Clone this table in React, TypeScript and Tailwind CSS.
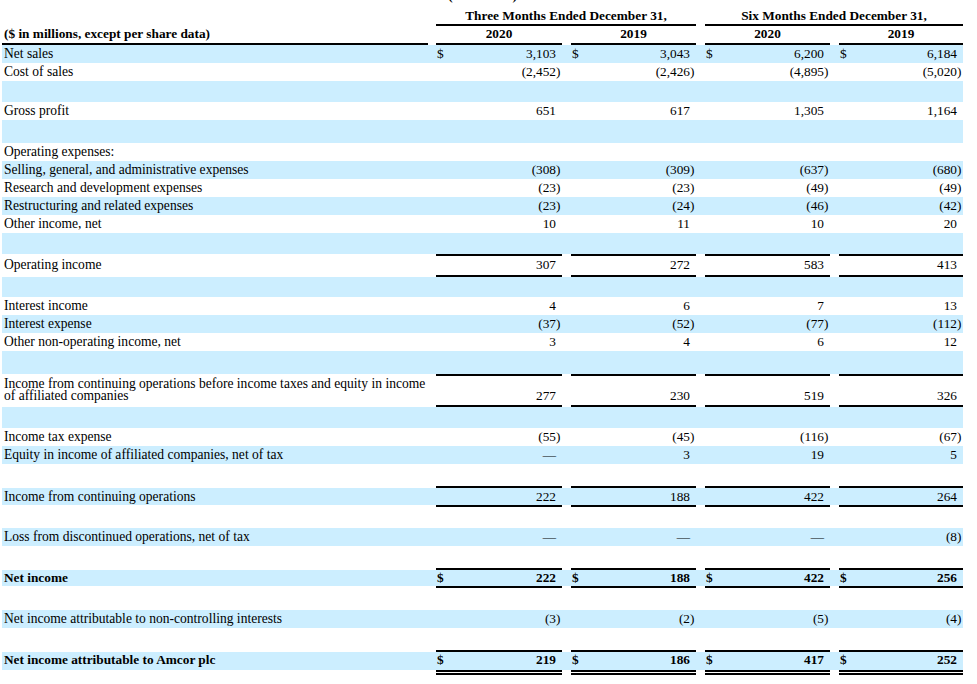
import React from "react";

type Row = {
  label?: React.ReactNode;
  v?: string[];
  blue?: boolean;
  h: string;
  border?: string;
  dollar?: boolean;
  bold?: boolean;
  lead?: string;
  labelCls?: string;
  bottomAlign?: boolean;
};

const cols =
  "grid grid-cols-[426px_8px_126px_9px_125px_9px_125px_9px_124px]";

const rows: Row[] = [
  { label: "Net sales", v: ["3,103", "3,043", "6,200", "6,184"], blue: true, h: "h-[18px]", dollar: true },
  { label: "Cost of sales", v: ["(2,452)", "(2,426)", "(4,895)", "(5,020)"], h: "h-[18px]", border: "border-b-2" },
  { blue: true, h: "h-[21px]" },
  { label: "Gross profit", v: ["651", "617", "1,305", "1,164"], h: "h-[18px]" },
  { blue: true, h: "h-[23px]" },
  { label: "Operating expenses:", h: "h-[18px]" },
  { label: "Selling, general, and administrative expenses", v: ["(308)", "(309)", "(637)", "(680)"], blue: true, h: "h-[18px]" },
  { label: "Research and development expenses", v: ["(23)", "(23)", "(49)", "(49)"], h: "h-[18px]" },
  { label: "Restructuring and related expenses", v: ["(23)", "(24)", "(46)", "(42)"], blue: true, h: "h-[18px]" },
  { label: "Other income, net", v: ["10", "11", "10", "20"], h: "h-[18px]" },
  { blue: true, h: "h-[21px]" },
  { label: "Operating income", v: ["307", "272", "583", "413"], h: "h-[23px]", border: "border-y-2" },
  { blue: true, h: "h-[20px]" },
  { label: "Interest income", v: ["4", "6", "7", "13"], h: "h-[18px]" },
  { label: "Interest expense", v: ["(37)", "(52)", "(77)", "(112)"], blue: true, h: "h-[18px]" },
  { label: "Other non-operating income, net", v: ["3", "4", "6", "12"], h: "h-[18px]" },
  { blue: true, h: "h-[23px]" },
  {
    label: (
      <>
        Income from continuing operations before income taxes and equity in income
        <br />
        of affiliated companies
      </>
    ),
    v: ["277", "230", "519", "326"],
    h: "h-[33px]",
    border: "border-y-2",
    labelCls: "pt-[1.5px] leading-[12px]",
    bottomAlign: true,
  },
  { blue: true, h: "h-[21px]" },
  { label: "Income tax expense", v: ["(55)", "(45)", "(116)", "(67)"], h: "h-[18px]" },
  { label: "Equity in income of affiliated companies, net of tax", v: ["—", "3", "19", "5"], blue: true, h: "h-[18px]" },
  { h: "h-[22px]" },
  { label: "Income from continuing operations", v: ["222", "188", "422", "264"], blue: true, h: "h-[21px]", border: "border-y-2", lead: "leading-[17px]" },
  { h: "h-[21px]" },
  { label: "Loss from discontinued operations, net of tax", v: ["—", "—", "—", "(8)"], blue: true, h: "h-[18px]" },
  { h: "h-[22px]" },
  { label: "Net income", v: ["222", "188", "422", "256"], blue: true, h: "h-[20px]", border: "border-y-2", dollar: true, bold: true, lead: "leading-[16px]" },
  { h: "h-[22px]" },
  { label: "Net income attributable to non-controlling interests", v: ["(3)", "(2)", "(5)", "(4)"], blue: true, h: "h-[18px]" },
  { h: "h-[22px]" },
  {
    label: "Net income attributable to Amcor plc",
    v: ["219", "186", "417", "252"],
    blue: true,
    h: "h-[25px]",
    border: "border-t-2 border-b-[5px] border-double",
    dollar: true,
    bold: true,
    lead: "leading-[16px]",
  },
];

const Amount: React.FC<{ val: string }> = ({ val }) => {
  const neg = val.startsWith("(");
  return (
    <span className="flex">
      <span>{neg ? val.slice(0, -1) : val}</span>
      <span className="w-[6px]">{neg ? ")" : ""}</span>
    </span>
  );
};

const TableRow: React.FC<{ row: Row }> = ({ row }) => {
  const bg = row.blue ? "bg-[#cceeff]" : "";
  const border = row.border ?? "";
  const lead = row.lead ?? "leading-[18px]";
  const weight = row.bold ? "font-bold" : "";
  const plain = `bg-clip-padding border-transparent ${border} ${bg}`;

  const group = (i: number) => (
    <div
      key={i}
      className={`flex justify-between pl-[1px] text-[13.3px] bg-clip-padding border-black ${border} ${bg} ${lead} ${weight} ${
        row.bottomAlign ? "items-end" : "items-start"
      }`}
    >
      <span>{row.dollar ? "$" : ""}</span>
      {row.v ? <Amount val={row.v[i]} /> : null}
    </div>
  );

  return (
    <div className={`${cols} ${row.h}`}>
      <div
        className={`pl-[2px] whitespace-nowrap ${row.bold ? "text-[13.3px]" : "text-[13.55px]"} ${plain} ${row.labelCls ?? lead} ${weight}`}
      >
        {row.label}
      </div>
      <div className={plain} />
      {group(0)}
      <div className={plain} />
      {group(1)}
      <div className={plain} />
      {group(2)}
      <div className={plain} />
      {group(3)}
    </div>
  );
};

export default function App() {
  return (
    <div className="ml-[2px] w-[961px] font-['Liberation_Serif',serif] text-[13.3px] text-black">
      <div className="-mt-[12px] h-[16px] text-center font-bold leading-[16px]">
        (Continued)
      </div>
      <div className={`${cols} h-[22px] font-bold leading-[16px]`}>
        <div />
        <div />
        <div className="col-span-3 border-b-2 border-black pt-[4px] text-center">
          Three Months Ended December 31,
        </div>
        <div />
        <div className="col-span-3 border-b-2 border-black pt-[4px] text-center">
          Six Months Ended December 31,
        </div>
      </div>
      <div className={`${cols} h-[19px] font-bold leading-[16px]`}>
        <div className="border-b-2 border-black pl-[2px]">
          ($ in millions, except per share data)
        </div>
        <div />
        <div className="border-b-2 border-black text-center">2020</div>
        <div />
        <div className="border-b-2 border-black text-center">2019</div>
        <div />
        <div className="border-b-2 border-black text-center">2020</div>
        <div />
        <div className="border-b-2 border-black text-center">2019</div>
      </div>
      {rows.map((row, i) => (
        <TableRow key={i} row={row} />
      ))}
    </div>
  );
}
